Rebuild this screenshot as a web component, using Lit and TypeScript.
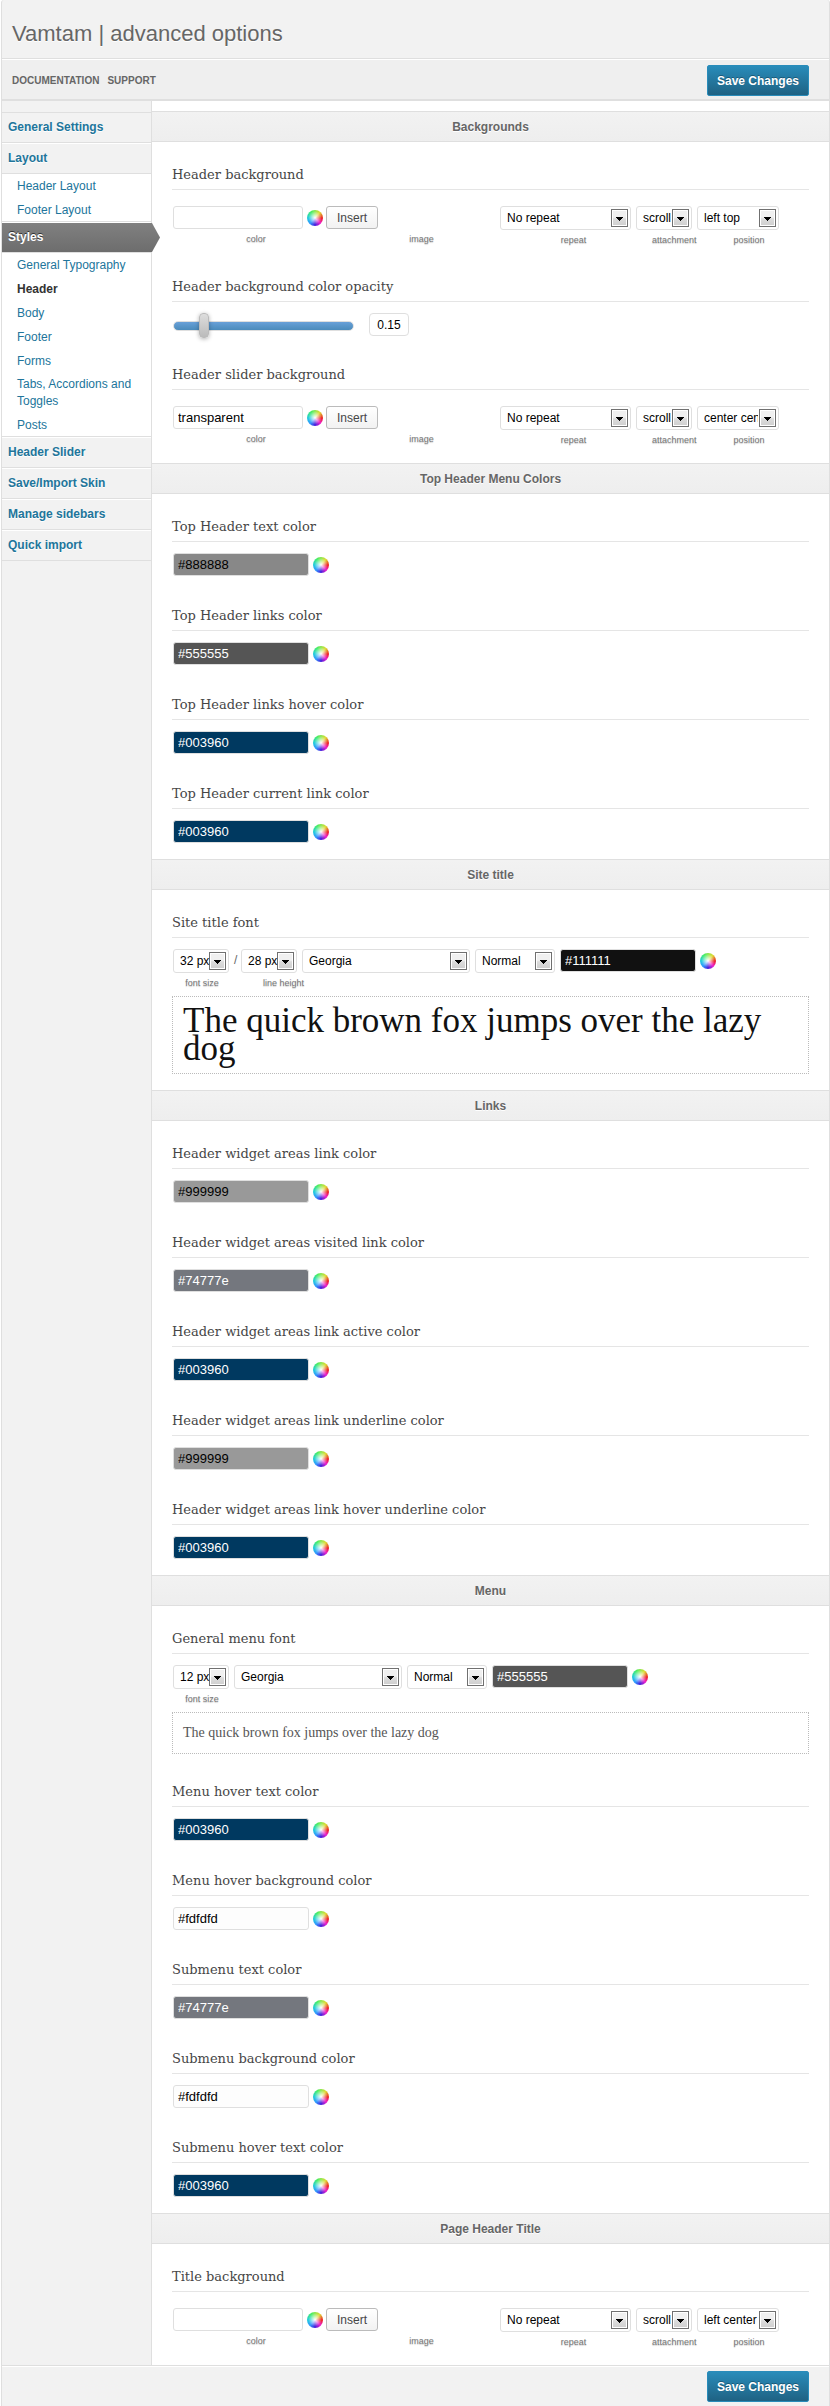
import { LitElement, html, css, svg } from "lit";
import { customElement } from "lit/decorators.js";
import { classMap } from "lit/directives/class-map.js";
import { styleMap } from "lit/directives/style-map.js";

interface MenuEntry {
  title: string;
  current?: boolean;
  children?: string[];
}

const MENU: MenuEntry[] = [
  { title: "General Settings" },
  { title: "Layout", children: ["Header Layout", "Footer Layout"] },
  {
    title: "Styles",
    current: true,
    children: [
      "General Typography",
      "Header",
      "Body",
      "Footer",
      "Forms",
      "Tabs, Accordions and Toggles",
      "Posts",
    ],
  },
  { title: "Header Slider" },
  { title: "Save/Import Skin" },
  { title: "Manage sidebars" },
  { title: "Quick import" },
];

const CURRENT_PAGE = "Header";
const PANGRAM = "The quick brown fox jumps over the lazy dog";

const slug = (s: string) => s.toLowerCase().replace(/[^a-z0-9]+/g, "-");

@customElement("app-root")
export class AppRoot extends LitElement {
  static styles = css`
    :host {
      display: block;
      box-sizing: border-box;
      padding-left: 1px;
      background: #fff;
      color: #464646;
      font: 12px/16px "Liberation Sans", Arial, sans-serif;
    }
    *,
    *::before,
    *::after {
      box-sizing: border-box;
    }
    h1,
    h2,
    h3,
    ul {
      margin: 0;
      padding: 0;
      font-weight: normal;
    }
    ul {
      list-style: none;
    }
    a {
      color: #21759b;
      text-decoration: none;
    }
    input,
    select,
    button {
      margin: 0;
      font-family: inherit;
    }
    .frame {
      border: 1px solid #dfdfdf;
      border-width: 0 1px;
      border-radius: 3px 3px 0 0;
      background: #f2f2f2;
    }
    .title {
      padding: 19px 10px 9px;
      border-bottom: 1px solid #dfdfdf;
      color: #666;
      font-size: 22px;
      line-height: 30px;
      text-shadow: 0 1px 0 #fff;
    }
    .toolbar {
      display: flex;
      justify-content: space-between;
      align-items: center;
      padding: 5px 20px 3px 10px;
      border-top: 1px solid #fff;
      border-bottom: 2px solid #dfdfdf;
      background: #efefef;
    }
    .links {
      display: flex;
      gap: 8px;
    }
    .links a {
      color: #666;
      font-size: 10px;
      font-weight: bold;
      text-transform: uppercase;
    }
    .save {
      height: 31px;
      padding: 0 9px;
      border: 1px solid #298cba;
      border-radius: 2px;
      background: linear-gradient(#298cba, #1f6283);
      color: #fff;
      font-size: 12px;
      font-weight: bold;
      text-shadow: 0 -1px 0 rgba(0, 0, 0, 0.3);
    }
    .columns {
      display: grid;
      grid-template-columns: 150px minmax(0, 1fr);
    }
    .sidebar {
      padding-top: 11px;
      border-right: 1px solid #dfdfdf;
    }
    .group {
      display: block;
      height: 31px;
      padding: 0 6px;
      border-top: 1px solid #fff;
      border-bottom: 1px solid #dfdfdf;
      font-weight: bold;
      line-height: 29px;
      text-shadow: 0 1px 0 #fff;
    }
    .menu > li:first-child .group {
      border-top-color: #dfdfdf;
    }
    .group.current {
      position: relative;
      background: linear-gradient(#808080, #6d6d6d) padding-box;
      color: #fff;
      text-shadow: 0 -1px 0 #333;
    }
    .pointer {
      position: absolute;
      top: 0;
      left: 100%;
      width: 9px;
      height: 29px;
    }
    .submenu {
      background: #fff;
      box-shadow: inset 0 -1px #dfdfdf;
    }
    .submenu a {
      display: block;
      padding: 4px 10px 4px 15px;
    }
    .submenu .wide {
      padding: 3px 10px 3px 15px;
      line-height: 17px;
    }
    .submenu .active {
      color: #333;
      font-weight: bold;
    }
    .main {
      padding-top: 10px;
      background: #fff;
    }
    .section {
      padding-bottom: 9px;
    }
    .section-title {
      padding-top: 1px;
      border: 1px solid #dfdfdf;
      border-width: 1px 0;
      background: linear-gradient(#f2f2f2, #eee);
      color: #666;
      font-size: 12px;
      font-weight: bold;
      line-height: 28px;
      text-align: center;
      text-shadow: 0 1px 0 #fff;
    }
    .field {
      padding: 0 20px;
    }
    .field-title {
      padding: 23px 0 4px;
      border-bottom: 1px solid #e5e5e5;
      font: 13px/20px "DejaVu Serif", Georgia, serif;
    }
    .body {
      min-height: 41px;
      padding: 11px 0 0 1px;
    }
    .body.background {
      min-height: 64px;
      padding-top: 16px;
    }
    .body.slider {
      min-height: 40px;
    }
    .row {
      display: flex;
      align-items: flex-start;
      gap: 5px;
    }
    .cell {
      display: flex;
      flex-direction: column;
    }
    .cell.image {
      width: 169px;
      align-items: flex-start;
      margin-left: -2px;
    }
    .cell.image .caption {
      align-self: stretch;
    }
    .caption {
      contain: inline-size;
      padding: 2px 0 0 22px;
      color: #777;
      font-size: 9px;
      line-height: 16px;
      text-align: center;
      text-shadow: 0 1px 1px #ccc;
      white-space: nowrap;
    }
    .caption.near {
      padding-left: 16px;
    }
    .caption.plain {
      padding-left: 2px;
    }
    .slash {
      width: 2px;
      line-height: 23px;
      color: #666;
    }
    .color {
      display: flex;
      align-items: center;
      gap: 4px;
    }
    .text {
      width: 136px;
      height: 23px;
      padding: 0 4px;
      border: 1px solid #dfdfdf;
      border-radius: 3px;
      background: #fff;
      color: #000;
      font-size: 13px;
      outline: none;
    }
    .text.light {
      color: #fff;
    }
    .text.narrow {
      width: 130px;
    }
    .text.value {
      width: 40px;
      border-radius: 4px;
      font-size: 12px;
      text-align: center;
    }
    .wheel {
      width: 16px;
      height: 16px;
      padding: 0;
      border: 0;
      border-radius: 50%;
      background:
        radial-gradient(circle at 50% 48%, #fff 0, rgba(255, 255, 255, 0.5) 30%, rgba(255, 255, 255, 0) 58%),
        conic-gradient(from 90deg, #e22, #e2c 12%, #42d 25%, #39f 37%, #2cd 50%, #4e6 66%, #dd3 86%, #e22);
    }
    .insert {
      height: 23px;
      padding: 0 10px;
      border: 1px solid #bbb;
      border-radius: 3px;
      background: linear-gradient(#fff, #f2f2f2);
      color: #464646;
      font-size: 12px;
    }
    .select {
      height: 24px;
      padding: 0 20px 0 6px;
      border: 1px solid #dfdfdf;
      border-radius: 3px;
      appearance: none;
      background: #fff
        url("data:image/svg+xml,%3Csvg xmlns='http://www.w3.org/2000/svg' width='17' height='18'%3E%3ClinearGradient id='g' x2='0' y2='1'%3E%3Cstop offset='.45' stop-color='%23f0f0f0'/%3E%3Cstop offset='.55' stop-color='%23dcdcdc'/%3E%3Cstop offset='1' stop-color='%23d0d0d0'/%3E%3C/linearGradient%3E%3Cpath fill='%23707070' d='M0 0h17v18H0z'/%3E%3Cpath fill='%23fff' d='M1 1h15v16H1z'/%3E%3Cpath fill='url(%23g)' d='M2 2h13v14H2z'/%3E%3Cpath d='M5 8h7v1h-1v1h-1v1H9v1H8v-1H7v-1H6V9H5z'/%3E%3C/svg%3E")
        right 2px center no-repeat;
      color: #000;
      font-size: 12px;
      outline: none;
    }
    .select.small {
      width: 56px;
      padding-right: 18px;
    }
    .select.medium {
      width: 80px;
    }
    .select.position {
      width: 82px;
    }
    .select.large {
      width: 131px;
    }
    .select.family {
      width: 168px;
    }
    .range-row {
      display: flex;
      gap: 15px;
    }
    .range {
      width: 181px;
      height: 25px;
      appearance: none;
      background: none;
    }
    .range::-webkit-slider-runnable-track {
      height: 10px;
      border: 1px solid #dfdfdf;
      border-radius: 5px;
      background: linear-gradient(#68a0d8, #4b8bbb);
    }
    .range::-webkit-slider-thumb {
      appearance: none;
      width: 10px;
      height: 25px;
      margin-top: -9px;
      border: 1px solid #bbb;
      border-radius: 4px;
      background: linear-gradient(#ddd, #bbb);
      box-shadow: 0 1px 4px rgba(0, 0, 0, 0.3);
    }
    .preview {
      margin: 5px 0 7px -1px;
      padding: 10px;
      border: 1px dotted #bbb;
      font-family: "Liberation Serif", Georgia, serif;
    }
    .preview.big {
      color: #111;
      font-size: 35px;
      line-height: 28px;
    }
    .preview.normal {
      margin-bottom: 5px;
      color: #555;
      font-size: 14px;
      line-height: 20px;
    }
    .footer {
      display: flex;
      justify-content: flex-end;
      padding: 5px 20px 4px;
      border-top: 1px solid #dfdfdf;
      box-shadow: inset 0 1px #fff;
    }
  `;

  private menuItem(entry: MenuEntry) {
    return html`<li>
      <a href="#${slug(entry.title)}" class=${classMap({ group: true, current: !!entry.current })}
        >${entry.title}${entry.current
          ? html`<svg class="pointer" viewBox="0 0 9 29" aria-hidden="true">
              ${svg`<defs><linearGradient id="p" x2="0" y2="1"><stop stop-color="#808080"/><stop offset="1" stop-color="#6d6d6d"/></linearGradient></defs><path d="M0 0h1l8 14.500-8 14.500H0z" fill="url(#p)"/>`}
            </svg>`
          : null}</a
      >
      ${entry.children
        ? html`<ul class="submenu">
            ${entry.children.map(
              (c) => html`<li>
                <a href="#${slug(c)}" class=${classMap({ active: c === CURRENT_PAGE, wide: c.length > 20 })}>${c}</a>
              </li>`,
            )}
          </ul>`
        : null}
    </li>`;
  }

  private color(id: string, value: string, light = false, narrow = false) {
    return html`<div class="color">
      <input
        id=${id}
        type="text"
        class=${classMap({ text: true, light, narrow })}
        style=${styleMap(value.startsWith("#") ? { backgroundColor: value } : {})}
        aria-label="color"
        .value=${value}
      />
      <button type="button" class="wheel" aria-label="Pick a color"></button>
    </div>`;
  }

  private select(id: string, size: string, value: string, label: string) {
    return html`<select id=${id} class="select ${size}" aria-label=${label}>
      <option>${value}</option>
    </select>`;
  }

  private colorField(title: string, value: string, light = false) {
    const id = slug(title);
    return html`<div class="field">
      <h3 class="field-title"><label for=${id}>${title}</label></h3>
      <div class="body">${this.color(id, value, light)}</div>
    </div>`;
  }

  private backgroundField(title: string, color: string, position: string) {
    const id = slug(title);
    return html`<div class="field">
      <h3 class="field-title">${title}</h3>
      <div class="body background">
        <div class="row">
          <div class="cell">
            ${this.color(`${id}-color`, color, false, true)}
            <label class="caption near" for="${id}-color">color</label>
          </div>
          <div class="cell image">
            <button id="${id}-image" type="button" class="insert">Insert</button>
            <label class="caption" for="${id}-image">image</label>
          </div>
          <div class="cell">
            ${this.select(`${id}-repeat`, "large", "No repeat", "repeat")}
            <label class="caption near" for="${id}-repeat">repeat</label>
          </div>
          <div class="cell">
            ${this.select(`${id}-attachment`, "small", "scroll", "attachment")}
            <label class="caption near" for="${id}-attachment">attachment</label>
          </div>
          <div class="cell">
            ${this.select(`${id}-position`, "position", position, "position")}
            <label class="caption" for="${id}-position">position</label>
          </div>
        </div>
      </div>
    </div>`;
  }

  private fontField(title: string, size: string, lineHeight: string | null, color: string, preview: string) {
    const id = slug(title);
    return html`<div class="field">
      <h3 class="field-title">${title}</h3>
      <div class="body">
        <div class="row">
          <div class="cell">
            ${this.select(`${id}-size`, "small", size, "font size")}
            <label class="caption plain" for="${id}-size">font size</label>
          </div>
          ${lineHeight
            ? html`<span class="slash">/</span>
                <div class="cell">
                  ${this.select(`${id}-line`, "small", lineHeight, "line height")}
                  <label class="caption" for="${id}-line">line height</label>
                </div>`
            : null}
          ${this.select(`${id}-family`, "family", "Georgia", "font family")}
          ${this.select(`${id}-weight`, "medium", "Normal", "font weight")}
          ${this.color(`${id}-color`, color, true)}
        </div>
        <div class="preview ${preview}">${PANGRAM}</div>
      </div>
    </div>`;
  }

  private section(title: string, content: unknown) {
    return html`<section class="section">
      <h2 class="section-title">${title}</h2>
      ${content}
    </section>`;
  }

  render() {
    return html`<div class="frame">
      <h1 class="title">Vamtam | advanced options</h1>
      <div class="toolbar">
        <nav class="links"><a href="#documentation">Documentation</a><a href="#support">Support</a></nav>
        <button type="button" class="save">Save Changes</button>
      </div>
      <div class="columns">
        <nav class="sidebar">
          <ul class="menu">
            ${MENU.map((e) => this.menuItem(e))}
          </ul>
        </nav>
        <main class="main">
          ${this.section(
            "Backgrounds",
            html`${this.backgroundField("Header background", "", "left top")}
              <div class="field">
                <h3 class="field-title"><label for="opacity">Header background color opacity</label></h3>
                <div class="body slider">
                  <div class="range-row">
                    <input id="opacity" class="range" type="range" min="0" max="1" step="0.01" value="0.15" />
                    <input class="text value" type="text" aria-label="Opacity value" value="0.15" />
                  </div>
                </div>
              </div>
              ${this.backgroundField("Header slider background", "transparent", "center center")}`,
          )}
          ${this.section(
            "Top Header Menu Colors",
            html`${this.colorField("Top Header text color", "#888888")}
            ${this.colorField("Top Header links color", "#555555", true)}
            ${this.colorField("Top Header links hover color", "#003960", true)}
            ${this.colorField("Top Header current link color", "#003960", true)}`,
          )}
          ${this.section("Site title", this.fontField("Site title font", "32 px", "28 px", "#111111", "big"))}
          ${this.section(
            "Links",
            html`${this.colorField("Header widget areas link color", "#999999")}
            ${this.colorField("Header widget areas visited link color", "#74777e", true)}
            ${this.colorField("Header widget areas link active color", "#003960", true)}
            ${this.colorField("Header widget areas link underline color", "#999999")}
            ${this.colorField("Header widget areas link hover underline color", "#003960", true)}`,
          )}
          ${this.section(
            "Menu",
            html`${this.fontField("General menu font", "12 px", null, "#555555", "normal")}
            ${this.colorField("Menu hover text color", "#003960", true)}
            ${this.colorField("Menu hover background color", "#fdfdfd")}
            ${this.colorField("Submenu text color", "#74777e", true)}
            ${this.colorField("Submenu background color", "#fdfdfd")}
            ${this.colorField("Submenu hover text color", "#003960", true)}`,
          )}
          ${this.section("Page Header Title", this.backgroundField("Title background", "", "left center"))}
        </main>
      </div>
      <div class="footer">
        <button type="button" class="save">Save Changes</button>
      </div>
    </div>`;
  }
}
